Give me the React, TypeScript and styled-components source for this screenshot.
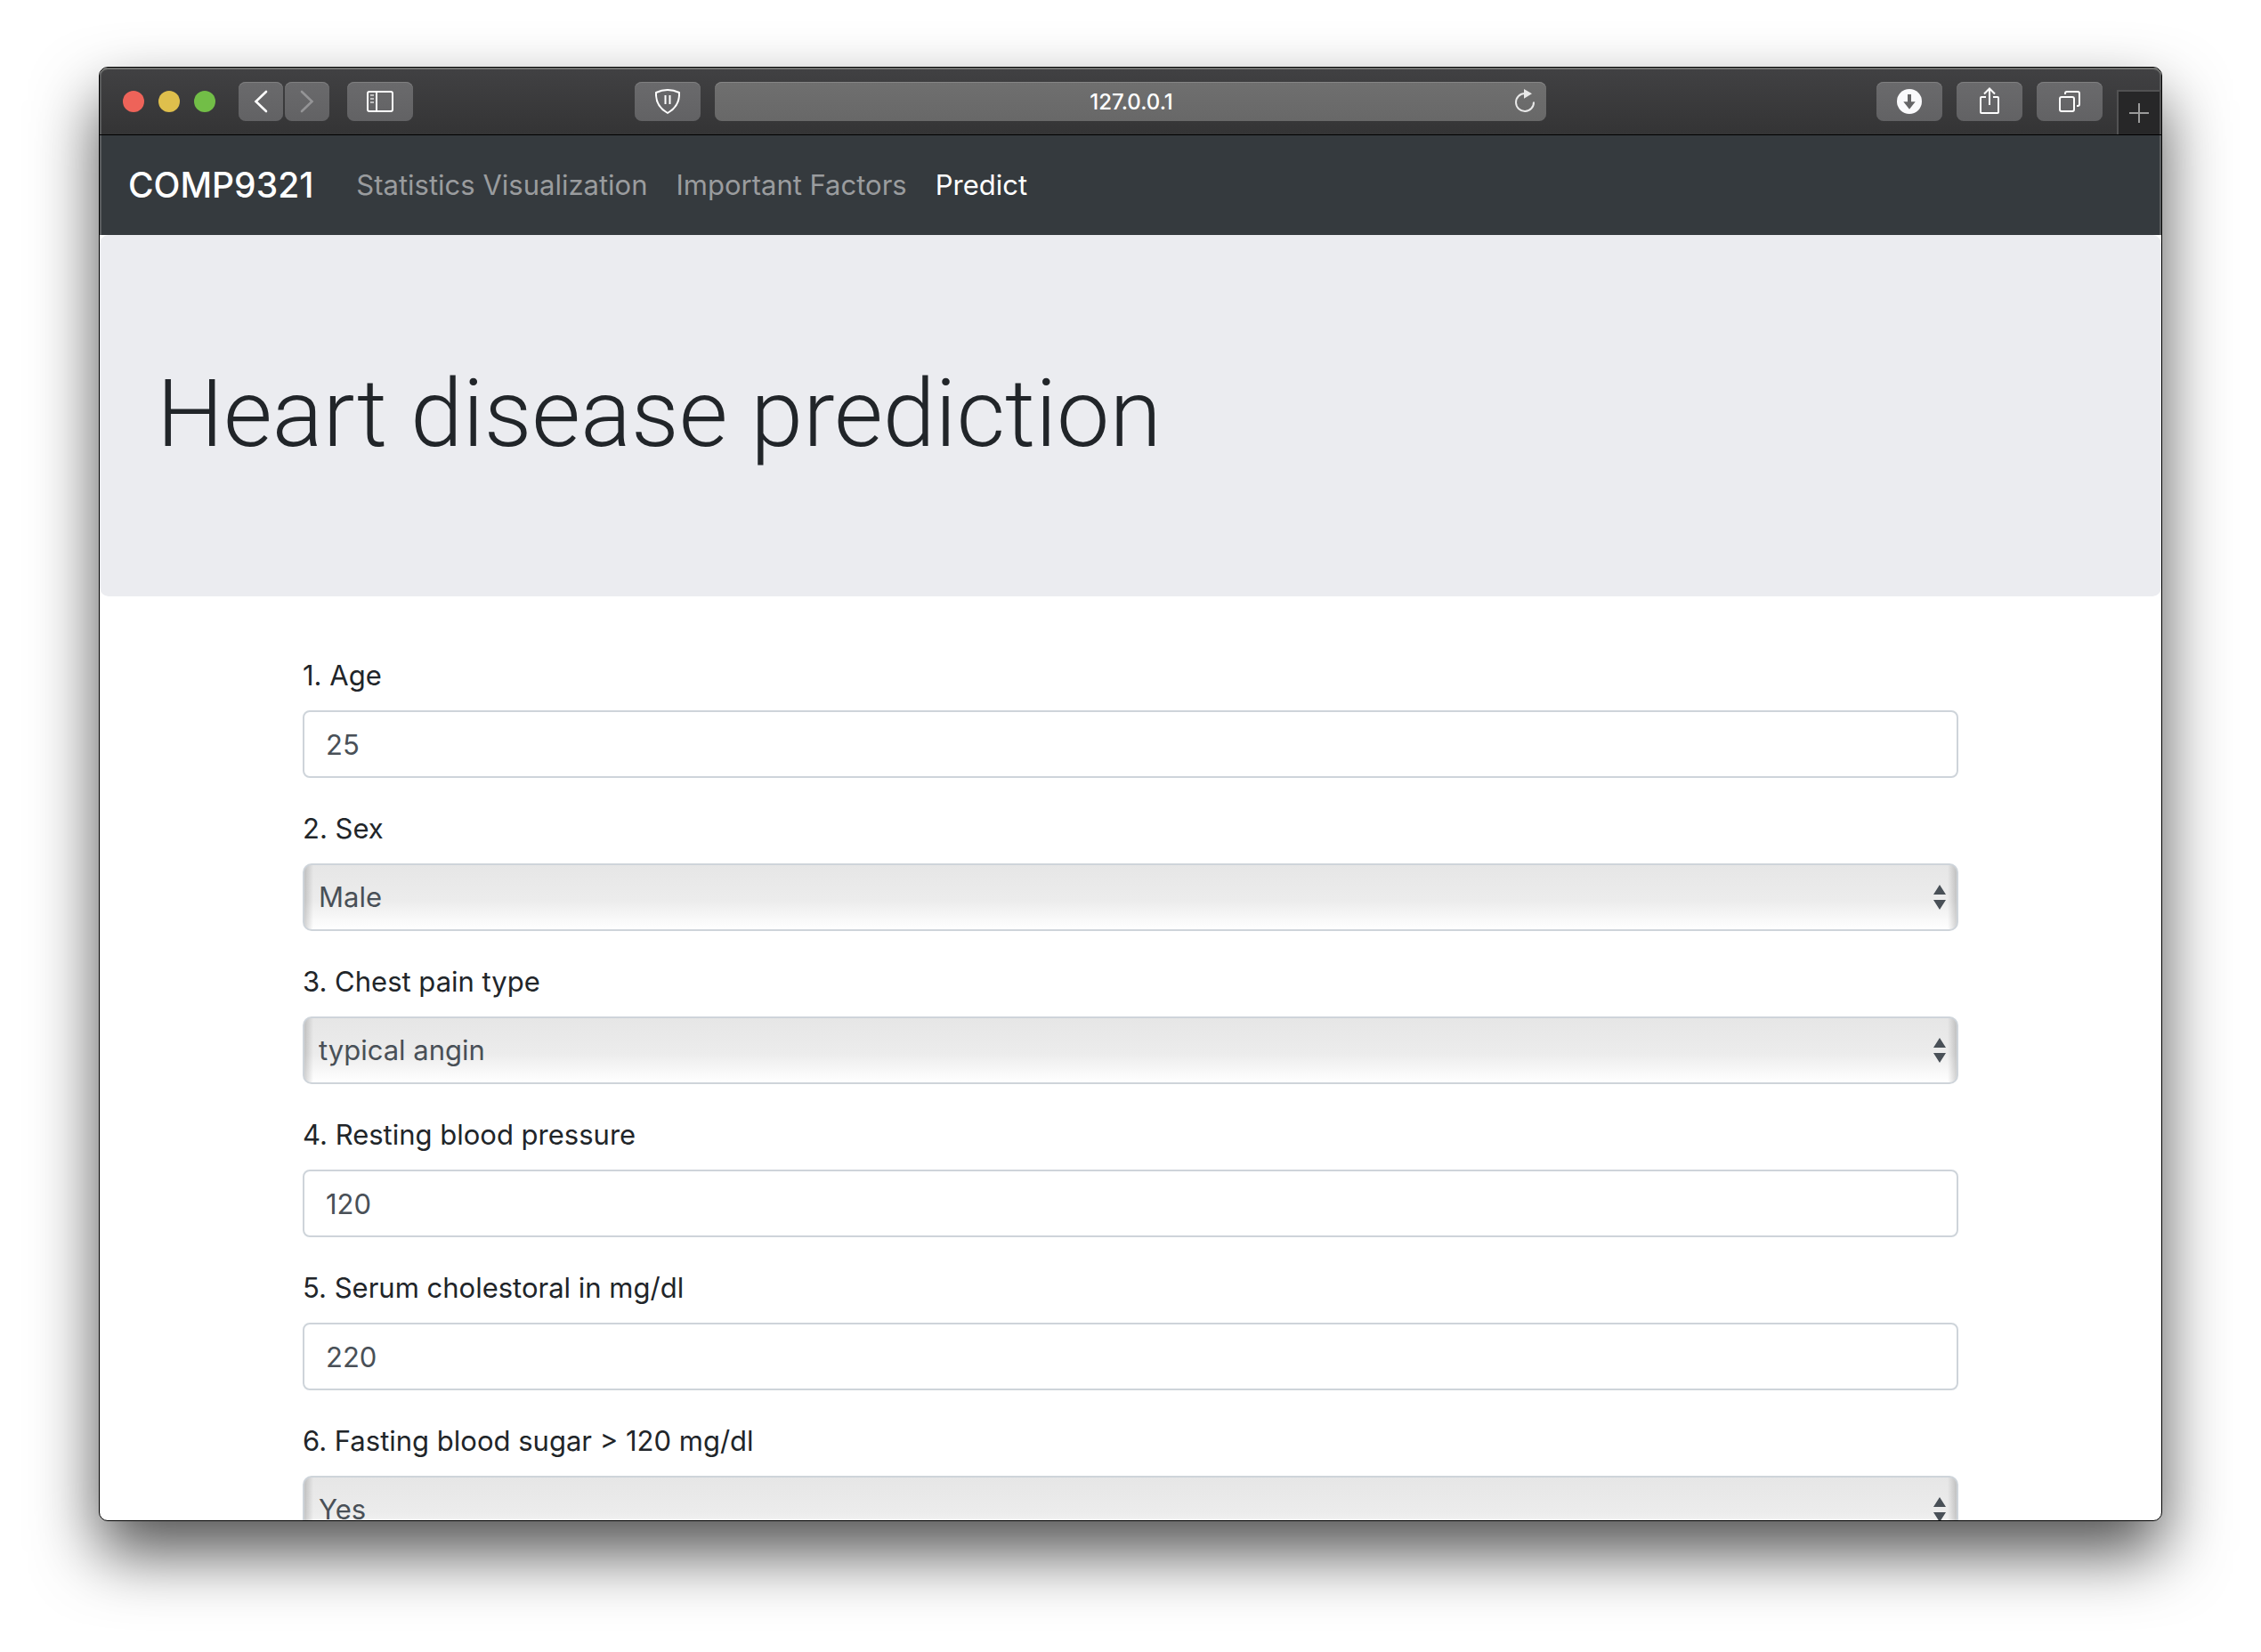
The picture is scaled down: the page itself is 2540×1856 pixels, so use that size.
import React from "react";
import styled, { createGlobalStyle } from "styled-components";

const GlobalStyle = createGlobalStyle`
  *, *::before, *::after { box-sizing: border-box; }
  body {
    margin: 0;
    background: #fff;
    color: #212529;
    font-family: Inter, "Liberation Sans", sans-serif;
    font-size: 31px;
    line-height: 50px;
  }
`;

const Desktop = styled.div`
  display: flex;
  height: 100vh;
  padding: 75px 111px 147px;
`;

const BrowserWindow = styled.div`
  flex: 1;
  min-width: 0;
  display: flex;
  flex-direction: column;
  overflow: hidden;
  border: 1px solid #000;
  border-radius: 10px;
  background: #fff;
  box-shadow: 0 36px 72px rgba(0, 0, 0, 0.68);
`;

const Toolbar = styled.header`
  display: grid;
  grid-template-columns: 1fr minmax(300px, 934px) 1fr;
  column-gap: 16px;
  height: 76px;
  flex: none;
  border-bottom: 1px solid #000;
  border-radius: 9px 9px 0 0;
  background: linear-gradient(#414143, #343435);
  box-shadow: inset 0 2px #70716f, inset 2px 0 #5a5b5c, inset -2px 0 #5a5b5c;
`;

const ToolbarStart = styled.div`
  display: flex;
  padding: 16px 0 0 26px;
`;

const ToolbarEnd = styled.div`
  display: flex;
  justify-content: flex-end;
  gap: 16px;
  padding-top: 16px;
`;

const Lights = styled.div`
  display: flex;
  gap: 16px;
  height: 44px;
  align-items: center;
  margin-right: 26px;
`;

const Light = styled.button<{ $color: string }>`
  width: 24px;
  height: 24px;
  padding: 0;
  border: 0;
  border-radius: 50%;
  background: ${(p) => p.$color};
`;

const History = styled.div`
  display: flex;
  gap: 2px;
  margin-right: 20px;
`;

const ToolButton = styled.button<{ $narrow?: boolean; $dim?: boolean; $end?: boolean }>`
  display: flex;
  align-items: center;
  justify-content: center;
  flex: none;
  width: ${(p) => (p.$narrow ? 50 : 74)}px;
  height: 44px;
  padding: 0;
  margin-left: ${(p) => (p.$end ? "auto" : 0)};
  border: 0;
  border-radius: 8px;
  color: ${(p) => (p.$dim ? "#949496" : "#fff")};
  background: linear-gradient(#6a6a6c, #626264);
  box-shadow: inset 0 1px #7f7f80;
`;

const AddressBar = styled.div`
  display: flex;
  align-items: center;
  height: 44px;
  margin-top: 16px;
  padding: 0 12px 0 38px;
  border-radius: 8px;
  background: linear-gradient(#6f6f6f, #686868);
  box-shadow: inset 0 1px #868686;
`;

const Address = styled.input`
  flex: 1;
  min-width: 0;
  padding: 2px 0 0;
  border: 0;
  background: none;
  color: #fff;
  font: 500 24px/32px Inter, "Liberation Sans", sans-serif;
  text-align: center;
`;

const PlainButton = styled.button`
  display: flex;
  padding: 0;
  border: 0;
  background: none;
  color: #e8e8e8;
`;

const NewTab = styled.button`
  display: flex;
  align-items: center;
  justify-content: center;
  align-self: flex-end;
  width: 50px;
  height: 50px;
  padding: 0;
  border: solid #525253;
  border-width: 2px 2px 0 2px;
  background: #272728;
  color: #9b9b9b;
`;

const Icon = styled.svg`
  display: block;
  flex: none;
  fill: none;
  stroke: currentColor;
  stroke-width: 2;
`;

const Navbar = styled.nav`
  display: flex;
  align-items: center;
  flex: none;
  height: 112px;
  padding: 0 32px;
  background: #353a3e;
  box-shadow: inset 2px 0 #5a5d60, inset -2px 0 #5a5d60;
`;

const Brand = styled.a`
  margin-right: 32px;
  color: #fff;
  font-size: 39px;
  font-weight: 500;
  line-height: 60px;
  text-decoration: none;
`;

const NavLink = styled.a<{ $active?: boolean }>`
  padding: 16px;
  color: ${(p) => (p.$active ? "#fff" : "#9a9c9e")};
  text-decoration: none;
`;

const Page = styled.main`
  flex: 1;
  min-height: 0;
  overflow: hidden;
`;

const Jumbotron = styled.section`
  padding: 128px 64px;
  margin-bottom: 64px;
  border-radius: 10px;
  background: #ebecf0;
`;

const Title = styled.h1`
  margin: 0 0 4px;
  font-family: Roboto, "Liberation Sans", sans-serif;
  font-size: 106px;
  font-weight: 300;
  line-height: 146px;
`;

const Form = styled.form`
  padding: 0 228px;
`;

const Group = styled.div`
  margin-bottom: 32px;
`;

const Label = styled.label`
  display: block;
  margin-bottom: 14px;
`;

const TextField = styled.input`
  display: block;
  width: 100%;
  height: 76px;
  padding: 0 24px;
  border: 2px solid #ced4da;
  border-radius: 8px;
  background: #fff;
  color: #495057;
  font: inherit;
`;

const SelectWrap = styled.div`
  position: relative;
`;

const SelectField = styled.select`
  appearance: none;
  display: block;
  width: 100%;
  height: 76px;
  padding: 0 48px 0 16px;
  border: 2px solid #ced4da;
  border-radius: 10px;
  background:
    linear-gradient(to right, rgba(0, 0, 0, 0.17), transparent) left / 10px 100% no-repeat,
    linear-gradient(to left, rgba(0, 0, 0, 0.17), transparent) right / 10px 100% no-repeat,
    linear-gradient(#e6e6e6, #ececec 55%, #fff);
  color: #495057;
  font: inherit;
`;

const Arrows = styled.svg`
  position: absolute;
  top: 24px;
  right: 14px;
  fill: #495057;
  pointer-events: none;
`;

type Field = { id: string; label: string; value: string; select?: boolean };

const fields: Field[] = [
  { id: "age", label: "1. Age", value: "25" },
  { id: "sex", label: "2. Sex", value: "Male", select: true },
  { id: "chest-pain", label: "3. Chest pain type", value: "typical angin", select: true },
  { id: "pressure", label: "4. Resting blood pressure", value: "120" },
  { id: "cholesterol", label: "5. Serum cholestoral in mg/dl", value: "220" },
  { id: "sugar", label: "6. Fasting blood sugar > 120 mg/dl", value: "Yes", select: true },
];

function FormField({ id, label, value, select }: Field) {
  return (
    <Group>
      <Label htmlFor={id}>{label}</Label>
      {select ? (
        <SelectWrap>
          <SelectField id={id} defaultValue={value}>
            <option>{value}</option>
          </SelectField>
          <Arrows width="14" height="28" viewBox="0 0 14 28">
            <path d="M7 0 14 11H0ZM0 17H14L7 28Z" />
          </Arrows>
        </SelectWrap>
      ) : (
        <TextField id={id} type="text" inputMode="numeric" defaultValue={value} />
      )}
    </Group>
  );
}

export default function App() {
  return (
    <>
      <GlobalStyle />
      <Desktop>
        <BrowserWindow>
          <Toolbar>
            <ToolbarStart>
              <Lights>
                <Light $color="#ee6359" aria-label="Close" />
                <Light $color="#dfbf4c" aria-label="Minimize" />
                <Light $color="#72be47" aria-label="Zoom" />
              </Lights>
              <History>
                <ToolButton $narrow aria-label="Back">
                  <Icon width="16" height="26" viewBox="0 0 16 26">
                    <path d="M14 2 2.500 13 14 24" strokeWidth="2.600" strokeLinecap="round" />
                  </Icon>
                </ToolButton>
                <ToolButton $narrow $dim aria-label="Forward">
                  <Icon width="16" height="26" viewBox="0 0 16 26">
                    <path d="M2 2 13.500 13 2 24" strokeWidth="2.600" strokeLinecap="round" />
                  </Icon>
                </ToolButton>
              </History>
              <ToolButton aria-label="Sidebar">
                <Icon width="30" height="24" viewBox="0 0 30 24">
                  <rect x="1" y="1" width="28" height="22" rx="2" />
                  <path d="M11 1V23" />
                  <path d="M4 5H8M4 9H8M4 13H8" stroke="#c0c0c1" />
                </Icon>
              </ToolButton>
              <ToolButton $end aria-label="Privacy report">
                <Icon width="28" height="28" viewBox="0 0 28 28">
                  <path d="M1 4Q14 -2 27 4C27.500 14 23 22 14 27C5 22 .5 14 1 4Z" strokeLinejoin="round" />
                  <path d="M11.500 7V17M16.500 7V17" />
                </Icon>
              </ToolButton>
            </ToolbarStart>
            <AddressBar>
              <Address aria-label="Address" defaultValue="127.0.0.1" />
              <PlainButton aria-label="Reload">
                <Icon width="24" height="28" viewBox="0 0 24 28">
                  <path d="M22 14.500A10 10 0 1 1 12 5" />
                  <path d="M11 0 20 5.300 11 10.700Z" fill="currentColor" stroke="none" />
                </Icon>
              </PlainButton>
            </AddressBar>
            <ToolbarEnd>
              <ToolButton aria-label="Downloads">
                <Icon width="28" height="28" viewBox="0 0 28 28">
                  <circle cx="14" cy="14" r="14" fill="#fafafc" stroke="none" />
                  <path d="M12 6H16V14.300H20.700L14 22.700 7.300 14.300H12Z" fill="#656567" stroke="none" />
                </Icon>
              </ToolButton>
              <ToolButton aria-label="Share">
                <Icon width="24" height="32" viewBox="0 0 24 32">
                  <path d="M8 11H3a1 1 0 0 0-1 1V28a1 1 0 0 0 1 1H21a1 1 0 0 0 1-1V12a1 1 0 0 0-1-1H16" />
                  <path d="M12 20V1.500M6 7.500 12 1.500 18 7.500" />
                </Icon>
              </ToolButton>
              <ToolButton aria-label="Show tabs">
                <Icon width="24" height="24" viewBox="0 0 24 24">
                  <rect x="1" y="7" width="16" height="16" rx="2" />
                  <path d="M7 4V3a2 2 0 0 1 2-2H21a2 2 0 0 1 2 2V15a2 2 0 0 1-2 2H20" />
                </Icon>
              </ToolButton>
              <NewTab aria-label="New tab">
                <Icon width="22" height="22" viewBox="0 0 22 22">
                  <path d="M11 0V22M0 11H22" />
                </Icon>
              </NewTab>
            </ToolbarEnd>
          </Toolbar>
          <Navbar>
            <Brand href="#">COMP9321</Brand>
            <NavLink href="#">Statistics Visualization</NavLink>
            <NavLink href="#">Important Factors</NavLink>
            <NavLink href="#" $active>Predict</NavLink>
          </Navbar>
          <Page>
            <Jumbotron>
              <Title>Heart disease prediction</Title>
            </Jumbotron>
            <Form>
              {fields.map((f) => (
                <FormField key={f.id} {...f} />
              ))}
            </Form>
          </Page>
        </BrowserWindow>
      </Desktop>
    </>
  );
}
